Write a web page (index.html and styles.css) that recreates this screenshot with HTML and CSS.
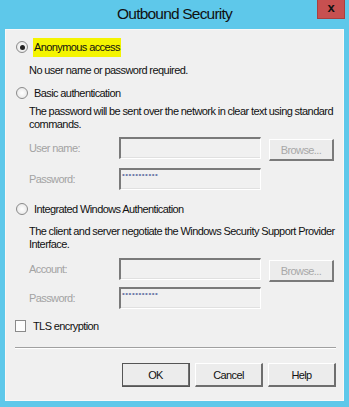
FILE: index.html
```html
<!DOCTYPE html>
<html>
<head>
<meta charset="utf-8">
<link rel="stylesheet" href="styles.css">
</head>
<body>
<div class="window">
  <div class="titlebar">
    <div class="spacer"></div>
    <div class="title">Outbound Security</div>
    <div class="close-wrap"><div class="close">x</div></div>
  </div>
  <div class="client">
    <div class="option first">
      <span class="radio checked"></span>
      <span class="opt-label hl">Anonymous access</span>
    </div>
    <div class="desc one">No user name or password required.</div>

    <div class="option second">
      <span class="radio"></span>
      <span class="opt-label">Basic authentication</span>
    </div>
    <div class="desc two">The password will be sent over the network in clear text using standard commands.</div>
    <div class="field f1">
      <span class="flabel">User name:</span>
      <span class="input"></span>
      <span class="btn disabled">Browse...</span>
    </div>
    <div class="field f2">
      <span class="flabel">Password:</span>
      <span class="input"><span class="dots">&#x2022;&#x2022;&#x2022;&#x2022;&#x2022;&#x2022;&#x2022;&#x2022;&#x2022;&#x2022;&#x2022;</span></span>
    </div>

    <div class="option third">
      <span class="radio"></span>
      <span class="opt-label">Integrated Windows Authentication</span>
    </div>
    <div class="desc three">The client and server negotiate the Windows Security Support Provider Interface.</div>
    <div class="field f3">
      <span class="flabel">Account:</span>
      <span class="input"></span>
      <span class="btn disabled">Browse...</span>
    </div>
    <div class="field f4">
      <span class="flabel">Password:</span>
      <span class="input"><span class="dots">&#x2022;&#x2022;&#x2022;&#x2022;&#x2022;&#x2022;&#x2022;&#x2022;&#x2022;&#x2022;&#x2022;</span></span>
    </div>

    <div class="check-row">
      <span class="checkbox"></span>
      <span class="opt-label">TLS encryption</span>
    </div>
    <div class="separator"></div>
    <div class="buttons">
      <span class="btn default">OK</span>
      <span class="btn">Cancel</span>
      <span class="btn">Help</span>
    </div>
  </div>
</div>
</body>
</html>
```

FILE: styles.css
```css
html, body {
  margin: 0;
  padding: 0;
}
body {
  width: 349px;
  height: 407px;
  background: #5ec8ea;
  font-family: "Liberation Sans", Arial, sans-serif;
  overflow: hidden;
}
.window {
  display: flex;
  flex-direction: column;
  height: 407px;
}
.titlebar {
  height: 29px;
  display: grid;
  grid-template-columns: 1fr auto 1fr;
  align-items: start;
}
.title {
  font-size: 15.5px;
  letter-spacing: -0.8px;
  color: #111;
  line-height: 16px;
  padding-top: 6px;
}
.close-wrap {
  display: flex;
  justify-content: flex-end;
  padding-right: 4px;
}
.close {
  width: 28px;
  height: 19px;
  background: #c75050;
  border: 1px solid #a8403f;
  border-top: none;
  box-sizing: border-box;
  color: #111;
  font-weight: bold;
  font-size: 13px;
  text-align: center;
  line-height: 15px;
}
.client {
  margin: 0 5px;
  height: 372px;
  box-sizing: border-box;
  background: #f0f0f0;
  border: 1px solid #f8f8f8;
  padding: 0 7px 0 9px;
  font-size: 11px;
  letter-spacing: -0.6px;
  color: #111;
}
.option {
  display: flex;
  align-items: center;
  height: 20px;
}
.option.first { margin-top: 7px; }
.option.second { margin-top: 6px; }
.option.third { margin-top: 9px; }
.radio {
  width: 12px;
  height: 12px;
  border-radius: 50%;
  border: 1px solid #8a8a8a;
  background: radial-gradient(circle, #ffffff 0%, #e2e2e2 100%);
  box-sizing: border-box;
  margin-left: 1px;
  margin-right: 5px;
  display: flex;
  align-items: center;
  justify-content: center;
}
.radio.checked::after {
  content: "";
  width: 5px;
  height: 5px;
  border-radius: 50%;
  background: #222;
}
.opt-label {
  line-height: 19px;
  padding: 0 1px;
}
.hl {
  background: #f4f400;
}
.desc {
  margin-left: 14px;
  line-height: 13px;
  letter-spacing: -0.55px;
  word-spacing: -0.2px;
}
.desc.one { margin-top: 7px; }
.desc.two { margin-top: 2px; }
.desc.three { margin-top: 6px; }
.field {
  display: flex;
  align-items: flex-start;
  height: 22px;
}
.f1 { margin-top: 6px; }
.f2 { margin-top: 9px; }
.f3 { margin-top: 7px; }
.f4 { margin-top: 7px; }
.flabel {
  width: 90px;
  margin-left: 14px;
  color: #a3a3a3;
  line-height: 22px;
}
.input {
  width: 142px;
  height: 22px;
  box-sizing: border-box;
  border-top: 2px solid #7a7a7a;
  border-left: 2px solid #7a7a7a;
  border-right: 1px solid #ffffff;
  border-bottom: 1px solid #ffffff;
  box-shadow: inset 0 -1px 0 #e0e0e0;
  background: #f0f0f0;
}
.dots {
  display: block;
  font-size: 8px;
  letter-spacing: 0.5px;
  color: #6e7aa8;
  line-height: 6px;
  padding-left: 1px;
  padding-top: 2px;
}
.btn {
  display: flex;
  align-items: center;
  justify-content: center;
  box-sizing: border-box;
  height: 22px;
  border-top: 1px solid #ffffff;
  border-left: 1px solid #ffffff;
  border-right: 2px solid #6e6e6e;
  border-bottom: 2px solid #6e6e6e;
  background: #ececec;
  font-size: 11px;
  color: #111;
}
.field .btn {
  width: 65px;
  margin-left: 8px;
  margin-top: 2px;
}
.btn.disabled {
  color: #a8a8a8;
  border-right-color: #7a7a7a;
  border-bottom-color: #7a7a7a;
}
.check-row {
  display: flex;
  align-items: center;
  margin-top: 9px;
  height: 16px;
}
.checkbox {
  width: 11px;
  height: 12px;
  box-sizing: border-box;
  border: 1px solid #8a8a8a;
  background: #fdfdfd;
  margin-right: 6px;
}
.separator {
  margin-top: 13px;
  height: 0;
  border-top: 1px solid #a0a0a0;
  border-bottom: 1px solid #ffffff;
}
.buttons {
  display: flex;
  justify-content: flex-end;
  gap: 5px;
  margin-top: 14px;
}
.buttons .btn {
  width: 68px;
  height: 24px;
}
.btn.default {
  outline: 1px solid #555;
  outline-offset: -1px;
}
```
